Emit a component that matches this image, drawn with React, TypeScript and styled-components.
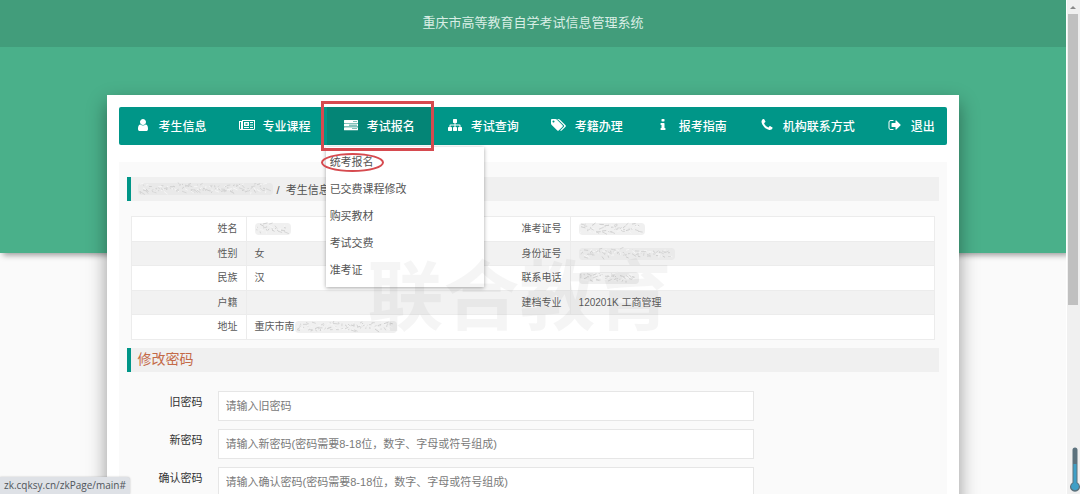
import React from "react";
import styled, { createGlobalStyle } from "styled-components";

const teal = "#009688";

const GlobalStyle = createGlobalStyle`
  *, *::before, *::after { box-sizing: border-box; }
  body {
    margin: 0;
    background: #fafafa;
    color: #555;
    font-family: "Liberation Sans", "Noto Sans CJK SC", sans-serif;
    font-size: 11px;
  }
  a { color: inherit; text-decoration: none; }
  ul { list-style: none; margin: 0; padding: 0; }
`;

const Window = styled.div`
  display: flex;
  height: 100vh;
  overflow: hidden;
  position: relative;
`;

const Page = styled.div`
  flex: 1;
  min-width: 0;
`;

const TopBar = styled.header`
  position: relative;
  height: 47px;
  padding-bottom: 1px;
  display: flex;
  align-items: center;
  justify-content: center;
  background: #429d7b;
`;

const SiteTitle = styled.h1`
  margin: 0;
  font-size: 13px;
  line-height: 20px;
  font-weight: 400;
  color: #d8eee5;
`;

const Banner = styled.div`
  height: 206px;
  background: #4ab08a;
  box-shadow: 3px 2px 6px rgba(0, 0, 0, 0.4);
`;

const Card = styled.main`
  position: relative;
  width: 80%;
  margin: -158px auto 0;
  padding: 12px;
  background: #fff;
  box-shadow: 0 8px 18px rgba(0, 0, 0, 0.4);
`;

const Nav = styled.nav`
  border-radius: 2px;
  background: ${teal};
`;

const NavList = styled.ul`
  display: flex;
`;

const NavItem = styled.li`
  position: relative;
  flex: none;
`;

const NavLink = styled.a<{ $active?: boolean }>`
  display: flex;
  align-items: center;
  gap: 8px;
  height: 38px;
  padding: 0 16px 2px;
  color: #fff;
  font-size: 12px;
  font-weight: 500;
  white-space: nowrap;
  background: ${(p) => (p.$active ? "#048576" : "transparent")};

  ${NavItem}:last-child & {
    padding-right: 8px;
  }
`;

const IconSlot = styled.span`
  display: flex;
  justify-content: center;
  width: 16px;

  svg {
    display: block;
    flex: none;
    fill: currentColor;
  }
`;

const Menu = styled.ul`
  position: absolute;
  z-index: 2;
  top: 40px;
  left: -1px;
  width: 158px;
  padding: 2px 0 3px;
  background: #fff;
  box-shadow: 0 1px 4px rgba(0, 0, 0, 0.35);
`;

const MenuLink = styled.a`
  display: block;
  padding: 0 4px;
  line-height: 27px;
  color: #555;
`;

const Marker = styled.span`
  position: absolute;
  z-index: 3;
  border: 3px solid #d64a4f;
  pointer-events: none;
`;

const BoxMarker = styled(Marker)`
  top: -6px;
  left: -6px;
  width: 113px;
  height: 50px;
`;

const OvalMarker = styled(Marker)`
  top: 46px;
  left: -6px;
  width: 63px;
  height: 19px;
  border-width: 2px;
  border-radius: 50%;
`;

const Panel = styled.div`
  position: relative;
  margin-top: 17px;
  padding: 15px 8px;
  background: #fafafa;
`;

const Bar = styled.div`
  display: flex;
  align-items: center;
  height: 24px;
  padding-left: 7px;
  border-left: 4px solid ${teal};
  background: #f0f0f0;
`;

const Crumb = styled.span`
  margin-left: 4px;
  white-space: pre;
  color: #505050;
`;

const Heading = styled.h2`
  margin: 0;
  font-size: 14px;
  line-height: 20px;
  padding-bottom: 2px;
  font-weight: 400;
  color: #c46a48;
`;

const InfoBox = styled.div`
  padding: 15px 4px 8px;
`;

const InfoTable = styled.table`
  width: 100%;
  table-layout: fixed;
  border-collapse: collapse;
  border: 1px solid #ececec;
  background: #fff;
  font-size: 10px;
  line-height: 14px;

  tr {
    height: 25px;
  }
  tr:nth-child(even) {
    height: 24px;
    background: #f2f2f2;
  }
  th,
  td {
    padding: 0 8px;
    border-top: 1px solid #ececec;
    font-weight: 400;
    color: #5a5a5a;
  }
  th {
    text-align: right;
    border-right: 1px solid #ececec;
  }
`;

const LabelCol = styled.col`
  width: 115px;
`;

const ValueCol = styled.col`
  width: 26%;
`;

const Value = styled.span`
  display: flex;
  align-items: center;
`;

const Watermark = styled.div`
  position: absolute;
  z-index: 3;
  top: 86px;
  left: 249px;
  font-size: 76px;
  line-height: 100px;
  font-weight: 700;
  white-space: nowrap;
  color: rgba(0, 0, 0, 0.04);
  pointer-events: none;
`;

const Form = styled.form`
  display: grid;
  grid-template-columns: 76px 66%;
  column-gap: 15px;
  row-gap: 8px;
  padding-top: 19px;
`;

const FieldLabel = styled.label`
  text-align: right;
  line-height: 22px;
  color: #333;
`;

const Field = styled.input`
  height: 30px;
  width: 100%;
  padding: 0 7px;
  border: 1px solid #e6e6e6;
  border-radius: 0;
  background: #fff;
  font: inherit;
  outline: none;

  &::placeholder {
    color: #7a7a7a;
    opacity: 1;
  }
`;

const StatusBar = styled.div`
  position: absolute;
  z-index: 4;
  left: 0;
  bottom: 0;
  height: 17px;
  padding: 0 4px;
  border-top-right-radius: 3px;
  background: #dee1e6;
  box-shadow: 0 0 2px rgba(0, 0, 0, 0.25);
  font-family: "Open Sans", "Noto Sans", sans-serif;
  font-size: 10px;
  line-height: 17px;
  color: #50555a;
`;

const ScrollTrack = styled.div`
  position: relative;
  z-index: 4;
  flex: none;
  width: 14px;
  padding: 0 2px 0 1px;
  border-left: 1px solid #fff;
  background: #f0f0f0;
`;

const ScrollArrow = styled.svg`
  display: block;
  width: 10px;
  height: 14px;
`;

const ScrollThumb = styled.div`
  height: 59%;
  background: #c0c0c0;
`;

const Thermometer = styled.svg`
  position: absolute;
  z-index: 5;
  right: 0;
  bottom: 2px;
`;

function Glyph({ d, w = 1792, width }: { d: string; w?: number; width: number }) {
  return (
    <svg viewBox={`0 0 ${w} 1792`} width={width} height={14} aria-hidden="true">
      <path d={d} />
    </svg>
  );
}

const icons = {
  user: (
    <Glyph
      width={14}
      d="M1536 1399q0 109-62.5 187t-150.5 78h-854q-88 0-150.5-78t-62.5-187q0-85 8.5-160.5t31.5-152 58.5-131 94-89 134.5-34.5q131 128 313 128t313-128q76 0 134.5 34.5t94 89 58.5 131 31.5 152 8.5 160.5zm-256-887q0 159-112.5 271.5t-271.5 112.5-271.5-112.5-112.5-271.5 112.5-271.5 271.5-112.5 271.5 112.5 112.5 271.5z"
    />
  ),
  news: (
    <svg viewBox="0 0 16 12" width={16} height={12} aria-hidden="true">
      <path
        fillRule="evenodd"
        d="M3 1h13v8.5a1.500 1.500 0 0 1-1.500 1.500h-13A1.500 1.500 0 0 1 0 9.500V2h3zM4 2v7.500q0 .3-.1.500H14.500a.5.5 0 0 0 .5-.5V2zM1 3v6.500a.5.5 0 0 0 1 0V3zM5 3h5v4H5zM6.500 4.300v1.400h2V4.300zM5 8h5v1H5zM11 3h3v1h-3zM11 5.500h3v1h-3zM11 8h3v1h-3z"
      />
    </svg>
  ),
  server: (
    <svg viewBox="0 0 14 12" width={14} height={12} aria-hidden="true">
      <path
        fillRule="evenodd"
        d="M.5 1h13q.5 0 .5.5v2q0 .5-.5.5h-13q-.5 0-.5-.5v-2q0-.5.5-.5zM9 2.200v.6h4v-.6zM.5 4.600h13q.5 0 .5.5v2q0 .5-.5.5h-13q-.5 0-.5-.5v-2q0-.5.5-.5zM5 5.800v.6h8v-.6zM.5 8.200h13q.5 0 .5.5v2q0 .5-.5.5h-13q-.5 0-.5-.5v-2q0-.5.5-.5zM8 9.400v.6h5v-.6z"
      />
    </svg>
  ),
  sitemap: (
    <Glyph
      width={14}
      d="M1792 1248v320q0 40-28 68t-68 28h-320q-40 0-68-28t-28-68v-320q0-40 28-68t68-28h96v-192h-512v192h96q40 0 68 28t28 68v320q0 40-28 68t-68 28h-320q-40 0-68-28t-28-68v-320q0-40 28-68t68-28h96v-192h-512v192h96q40 0 68 28t28 68v320q0 40-28 68t-68 28h-320q-40 0-68-28t-28-68v-320q0-40 28-68t68-28h96v-192q0-52 38-90t90-38h512v-192h-96q-40 0-68-28t-28-68v-320q0-40 28-68t68-28h320q40 0 68 28t28 68v320q0 40-28 68t-68 28h-96v192h512q52 0 90 38t38 90v192h96q40 0 68 28t28 68z"
    />
  ),
  tags: (
    <Glyph
      w={1920}
      width={15}
      d="M448 448q0-53-37.500-90.500t-90.500-37.500-90.500 37.500-37.500 90.500 37.500 90.500 90.500 37.500 90.500-37.500 37.500-90.500zm1067 576q0 53-37 90l-491 492q-39 37-91 37-53 0-90-37l-715-716q-38-37-64.500-101t-26.500-117v-416q0-52 38-90t90-38h416q53 0 117 26.500t102 64.500l715 714q37 39 37 91zm384 0q0 53-37 90l-491 492q-39 37-91 37-36 0-59-14t-53-45l470-470q37-37 37-90 0-52-37-91l-715-714q-38-38-102-64.500t-117-26.500h224q53 0 117 26.500t102 64.500l715 714q37 39 37 91z"
    />
  ),
  info: (
    <Glyph
      width={14}
      d="M1216 1344v128q0 26-19 45t-45 19h-512q-26 0-45-19t-19-45v-128q0-26 19-45t45-19h64v-384h-64q-26 0-45-19t-19-45v-128q0-26 19-45t45-19h384q26 0 45 19t19 45v576h64q26 0 45 19t19 45zm-128-1152v192q0 26-19 45t-45 19h-256q-26 0-45-19t-19-45v-192q0-26 19-45t45-19h256q26 0 45 19t19 45z"
    />
  ),
  phone: (
    <Glyph
      width={14}
      d="M1600 1240q0 27-10 70.500t-21 68.500q-21 50-122 106-94 51-186 51-27 0-53-3.500t-57.500-12.500-47-14.500-55.500-20.500-49-18q-98-35-175-83-127-79-264-216t-216-264q-48-77-83-175-3-9-18-49t-20.500-55.500-14.500-47-12.500-57.500-3.500-53q0-92 51-186 56-101 106-122 25-11 68.500-21t70.500-10q14 0 21 3 18 6 53 76 11 19 30 54t35 63.500 31 53.500q3 4 17.500 25t21.500 35.500 7 28.500q0 20-28.500 50t-62 55-62 53-28.500 46q0 9 5 22.500t8.500 20.500 14 24 11.500 19q76 137 174 235t235 174q2 1 19 11.500t24 14 20.500 8.500 22.500 5q18 0 46-28.500t53-62 55-62 50-28.500q14 0 28.500 7t35.500 21.500 25 17.500q25 15 53.500 31t63.500 35 54 30q70 35 76 53 3 7 3 21z"
    />
  ),
  exit: (
    <Glyph
      width={14}
      d="M704 1440q0 4 1 20t.5 26.500-3 23.500-10 19.500-20.500 6.500h-320q-119 0-203.500-84.500t-84.500-203.500v-704q0-119 84.500-203.500t203.500-84.500h320q13 0 22.500 9.500t9.500 22.500q0 4 1 20t.5 26.500-3 23.500-10 19.500-20.500 6.500h-320q-66 0-113 47t-47 113v704q0 66 47 113t113 47h312l11.500 1 11.500 3 8 5.500 7 9 2 13.500zm928-544q0 26-19 45l-544 544q-19 19-45 19t-45-19-19-45v-288h-448q-26 0-45-19t-19-45v-384q0-26 19-45t45-19h448v-288q0-26 19-45t45-19 45 19l544 544q19 19 19 45z"
    />
  ),
};

const navItems: { icon: keyof typeof icons; label: string; menu?: string[] }[] = [
  { icon: "user", label: "考生信息" },
  { icon: "news", label: "专业课程" },
  {
    icon: "server",
    label: "考试报名",
    menu: ["统考报名", "已交费课程修改", "购买教材", "考试交费", "准考证"],
  },
  { icon: "sitemap", label: "考试查询" },
  { icon: "tags", label: "考籍办理" },
  { icon: "info", label: "报考指南" },
  { icon: "phone", label: "机构联系方式" },
  { icon: "exit", label: "退出" },
];

/* Scribble that hides personal data: short irregular strokes over a soft patch. */
function Redacted({ width, seed = 1 }: { width: number; seed?: number }) {
  let s = seed * 7919;
  const rnd = () => {
    s = (s * 1103515245 + 12345) % 2147483648;
    return s / 2147483648;
  };
  const stroke = () => {
    let d = "";
    for (let x = 2; x < width - 5; x += 3) {
      const y = 2 + rnd() * 8;
      d += `M${x.toFixed(1)} ${y.toFixed(1)}l${(rnd() * 6 - 1).toFixed(1)} ${(rnd() * 5 - 2).toFixed(1)}`;
    }
    return d;
  };
  return (
    <svg width={width} height={14} viewBox={`0 0 ${width} 14`} fill="none" aria-hidden="true">
      <rect x="0" y="1" width={width} height="12" rx="4" fill="#e2e2e2" opacity="0.5" />
      <path d={stroke()} stroke="#d0d0d0" />
      <path d={stroke()} stroke="#f6f6f6" />
      <path d={stroke()} stroke="#d6d6d6" />
    </svg>
  );
}

const fields = [
  { id: "old", label: "旧密码", hint: "请输入旧密码" },
  { id: "new", label: "新密码", hint: "请输入新密码(密码需要8-18位，数字、字母或符号组成)" },
  { id: "confirm", label: "确认密码", hint: "请输入确认密码(密码需要8-18位，数字、字母或符号组成)" },
];

export default function App() {
  return (
    <Window>
      <GlobalStyle />
      <Page>
        <TopBar>
          <SiteTitle>重庆市高等教育自学考试信息管理系统</SiteTitle>
        </TopBar>
        <Banner />
        <Card>
          <Nav>
            <NavList>
              {navItems.map((item) => (
                <NavItem key={item.label}>
                  <NavLink href="#" $active={!!item.menu}>
                    <IconSlot>{icons[item.icon]}</IconSlot>
                    {item.label}
                  </NavLink>
                  {item.menu && (
                    <>
                      <Menu>
                        {item.menu.map((m) => (
                          <li key={m}>
                            <MenuLink href="#">{m}</MenuLink>
                          </li>
                        ))}
                      </Menu>
                      <BoxMarker />
                      <OvalMarker />
                    </>
                  )}
                </NavItem>
              ))}
            </NavList>
          </Nav>
          <Panel>
            <Bar>
              <Redacted width={135} seed={3} />
              <Crumb>/  考生信息</Crumb>
            </Bar>
            <InfoBox>
              <InfoTable>
                <colgroup>
                  <LabelCol />
                  <ValueCol />
                  <LabelCol />
                  <col />
                </colgroup>
                <tbody>
                  <tr>
                    <th scope="row">姓名</th>
                    <td><Value><Redacted width={36} seed={5} /></Value></td>
                    <th scope="row">准考证号</th>
                    <td><Value><Redacted width={66} seed={8} /></Value></td>
                  </tr>
                  <tr>
                    <th scope="row">性别</th>
                    <td>女</td>
                    <th scope="row">身份证号</th>
                    <td><Value><Redacted width={96} seed={11} /></Value></td>
                  </tr>
                  <tr>
                    <th scope="row">民族</th>
                    <td>汉</td>
                    <th scope="row">联系电话</th>
                    <td><Value><Redacted width={60} seed={14} /></Value></td>
                  </tr>
                  <tr>
                    <th scope="row">户籍</th>
                    <td />
                    <th scope="row">建档专业</th>
                    <td>120201K 工商管理</td>
                  </tr>
                  <tr>
                    <th scope="row">地址</th>
                    <td colSpan={3}>
                      <Value>
                        重庆市南
                        <Redacted width={102} seed={17} />
                      </Value>
                    </td>
                  </tr>
                </tbody>
              </InfoTable>
            </InfoBox>
            <Watermark>联合教育</Watermark>
            <Bar>
              <Heading>修改密码</Heading>
            </Bar>
            <Form>
              {fields.map((f) => (
                <React.Fragment key={f.id}>
                  <FieldLabel htmlFor={f.id}>{f.label}</FieldLabel>
                  <Field id={f.id} type="password" placeholder={f.hint} />
                </React.Fragment>
              ))}
            </Form>
          </Panel>
        </Card>
      </Page>
      <ScrollTrack>
        <ScrollArrow viewBox="0 0 10 14" aria-hidden="true">
          <path d="M2 9l3-3 3 3z" fill="#8a8a8a" />
        </ScrollArrow>
        <ScrollThumb />
      </ScrollTrack>
      <Thermometer width={10} height={45} viewBox="0 0 10 45" aria-hidden="true">
        <path d="M2.500 3a2.500 2.500 0 0 1 5 0V35.500a5 5 0 1 1-5 0z" fill="#5c727d" />
        <path d="M3.500 17h3V36a3.800 3.800 0 1 1-3 0z" fill="#3f9fc6" />
      </Thermometer>
      <StatusBar>zk.cqksy.cn/zkPage/main#</StatusBar>
    </Window>
  );
}
